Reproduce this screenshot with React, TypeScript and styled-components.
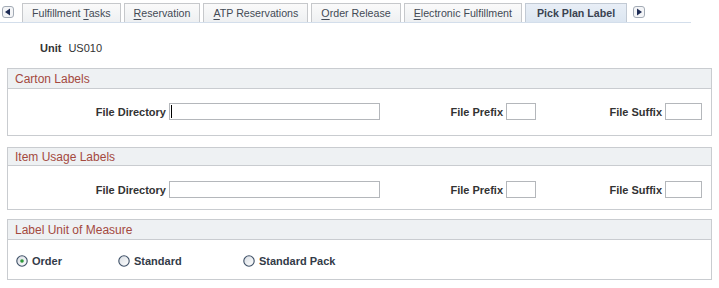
import React from "react";
import styled, { createGlobalStyle } from "styled-components";

const GlobalStyle = createGlobalStyle`
  body {
    margin: 0;
    background: #ffffff;
    font-family: "Liberation Sans", Arial, sans-serif;
  }
`;

const tabs = [
  { pre: "Fulfillment ", key: "T", post: "asks" },
  { pre: "", key: "R", post: "eservation" },
  { pre: "", key: "A", post: "TP Reservations" },
  { pre: "", key: "O", post: "rder Release" },
  { pre: "", key: "E", post: "lectronic Fulfillment" },
];

const NavArrow: React.FC<{ dir: "left" | "right" }> = ({ dir }) => (
  <svg width="12" height="12" viewBox="0 0 12 12">
    <rect x="0.5" y="0.5" width="11" height="11" rx="2.5" fill="#f4f5f7" stroke="#a3abb5" />
    {dir === "left" ? (
      <polygon points="3,6 8,2.5 8,9.5" fill="#1e2c55" />
    ) : (
      <polygon points="9,6 4,2.5 4,9.5" fill="#1e2c55" />
    )}
  </svg>
);

const Radio: React.FC<{ checked?: boolean }> = ({ checked }) => (
  <svg width="12" height="12" viewBox="0 0 12 12">
    <defs>
      <linearGradient id="rg" x1="0" y1="0" x2="1" y2="1">
        <stop offset="0" stopColor="#d8dde3" />
        <stop offset="1" stopColor="#ffffff" />
      </linearGradient>
    </defs>
    <circle cx="6" cy="6" r="5.2" fill="url(#rg)" stroke="#3d4f66" strokeWidth="1.1" />
    {checked && <circle cx="6" cy="6" r="1.8" fill="#2f9a3a" />}
  </svg>
);

const App: React.FC = () => {
  return (
    <>
      <GlobalStyle />
      <Page>
        <TabBar>
          <ArrowSlot side="left">
            <NavArrow dir="left" />
          </ArrowSlot>
          <Tabs>
            {tabs.map((t) => (
              <Tab key={t.pre + t.key + t.post}>
                <span>
                  {t.pre}
                  <u>{t.key}</u>
                  {t.post}
                </span>
              </Tab>
            ))}
            <Tab active>
              <span>Pick Plan Label</span>
            </Tab>
          </Tabs>
          <ArrowSlot side="right">
            <NavArrow dir="right" />
          </ArrowSlot>
        </TabBar>

        <UnitRow>
          <UnitLabel>Unit</UnitLabel>
          <UnitValue>US010</UnitValue>
        </UnitRow>

        <Section gap={13}>
          <SectionHeader height={19}>Carton Labels</SectionHeader>
          <SectionBody height={46} top={14}>
            <Field width={372}>
              <FieldLabel>File Directory</FieldLabel>
              <InputWrap>
                <TextInput width={211} />
                <Caret />
              </InputWrap>
            </Field>
            <Field width={156}>
              <FieldLabel>File Prefix</FieldLabel>
              <TextInput width={30} />
            </Field>
            <Field width={166}>
              <FieldLabel>File Suffix</FieldLabel>
              <TextInput width={37} />
            </Field>
          </SectionBody>
        </Section>

        <Section gap={11}>
          <SectionHeader height={17}>Item Usage Labels</SectionHeader>
          <SectionBody height={43} top={15}>
            <Field width={372}>
              <FieldLabel>File Directory</FieldLabel>
              <TextInput width={211} />
            </Field>
            <Field width={156}>
              <FieldLabel>File Prefix</FieldLabel>
              <TextInput width={30} />
            </Field>
            <Field width={166}>
              <FieldLabel>File Suffix</FieldLabel>
              <TextInput width={37} />
            </Field>
          </SectionBody>
        </Section>

        <Section gap={9}>
          <SectionHeader height={19}>Label Unit of Measure</SectionHeader>
          <RadioBody>
            <RadioOption width={102}>
              <Radio checked />
              <RadioText>Order</RadioText>
            </RadioOption>
            <RadioOption width={125}>
              <Radio />
              <RadioText>Standard</RadioText>
            </RadioOption>
            <RadioOption width={120}>
              <Radio />
              <RadioText>Standard Pack</RadioText>
            </RadioOption>
          </RadioBody>
        </Section>
      </Page>
    </>
  );
};

const Page = styled.div`
  width: 719px;
  height: 288px;
  overflow: hidden;
`;

const TabBar = styled.div`
  display: flex;
  align-items: flex-end;
  width: 691px;
  height: 23px;
  padding-top: 3px;
  box-sizing: border-box;
  border-bottom: 1px solid #d3deeb;
`;

const ArrowSlot = styled.div<{ side: "left" | "right" }>`
  display: flex;
  align-self: flex-start;
  margin-top: 3px;
  margin-left: ${(p) => (p.side === "left" ? "2px" : "6px")};
  margin-right: ${(p) => (p.side === "left" ? "8px" : "0")};
`;

const Tabs = styled.div`
  display: flex;
  gap: 3px;
`;

const Tab = styled.div<{ active?: boolean }>`
  height: 19px;
  box-sizing: border-box;
  padding: 0 ${(p) => (p.active ? 11 : 9)}px;
  display: flex;
  align-items: center;
  border: 1px solid ${(p) => (p.active ? "#c2cad4" : "#c6c8cb")};
  border-bottom: none;
  background: ${(p) =>
    p.active
      ? "linear-gradient(#e8eef6, #dce6f1)"
      : "linear-gradient(#fafafa, #eef0f2)"};
  color: ${(p) => (p.active ? "#3a4250" : "#434a55")};
  font-size: 10.67px;
  font-weight: ${(p) => (p.active ? "bold" : "normal")};
  white-space: pre;

  u {
    text-decoration-thickness: 1px;
    text-underline-offset: 2px;
  }
`;

const UnitRow = styled.div`
  display: flex;
  align-items: center;
  gap: 7px;
  height: 14px;
  margin-top: 18px;
  padding-left: 40px;
  font-size: 11px;
  color: #333;
`;

const UnitLabel = styled.span`
  font-weight: bold;
`;

const UnitValue = styled.span``;

const Section = styled.section<{ gap: number }>`
  margin: ${(p) => p.gap}px 0 0 7px;
  width: 705px;
  box-sizing: border-box;
  border: 1px solid #c9ccd0;
`;

const SectionHeader = styled.div<{ height: number }>`
  height: ${(p) => p.height}px;
  display: flex;
  align-items: center;
  padding-left: 7px;
  background: #eef1f3;
  border-bottom: 1px solid #c9ccd0;
  color: #a4493e;
  font-size: 12px;
`;

const SectionBody = styled.div<{ height: number; top: number }>`
  height: ${(p) => p.height}px;
  box-sizing: border-box;
  padding-top: ${(p) => p.top}px;
  display: flex;
  align-items: flex-start;
`;

const Field = styled.div<{ width: number }>`
  width: ${(p) => p.width}px;
  display: flex;
  align-items: center;
  justify-content: flex-end;
  gap: 3px;
`;

const FieldLabel = styled.span`
  font-size: 11px;
  font-weight: bold;
  color: #333;
  white-space: nowrap;
`;

const InputWrap = styled.div`
  position: relative;
  display: flex;
`;

const TextInput = styled.input.attrs({ type: "text" })<{ width: number }>`
  width: ${(p) => p.width}px;
  height: 17px;
  box-sizing: border-box;
  margin: 0;
  padding: 0 2px;
  border: 1px solid #b4b7bb;
  background: #fff;
  font-family: "Liberation Sans", Arial, sans-serif;
  font-size: 11px;
  outline: none;
`;

const Caret = styled.span`
  position: absolute;
  left: 2px;
  top: 2px;
  width: 1px;
  height: 13px;
  background: #000;
`;

const RadioBody = styled.div`
  height: 39px;
  display: flex;
  align-items: center;
  padding-left: 8px;
  padding-top: 2px;
  box-sizing: border-box;
`;

const RadioOption = styled.label<{ width: number }>`
  width: ${(p) => p.width}px;
  display: flex;
  align-items: center;
  gap: 4px;
`;

const RadioText = styled.span`
  font-size: 11px;
  font-weight: bold;
  color: #333b48;
`;

export default App;
